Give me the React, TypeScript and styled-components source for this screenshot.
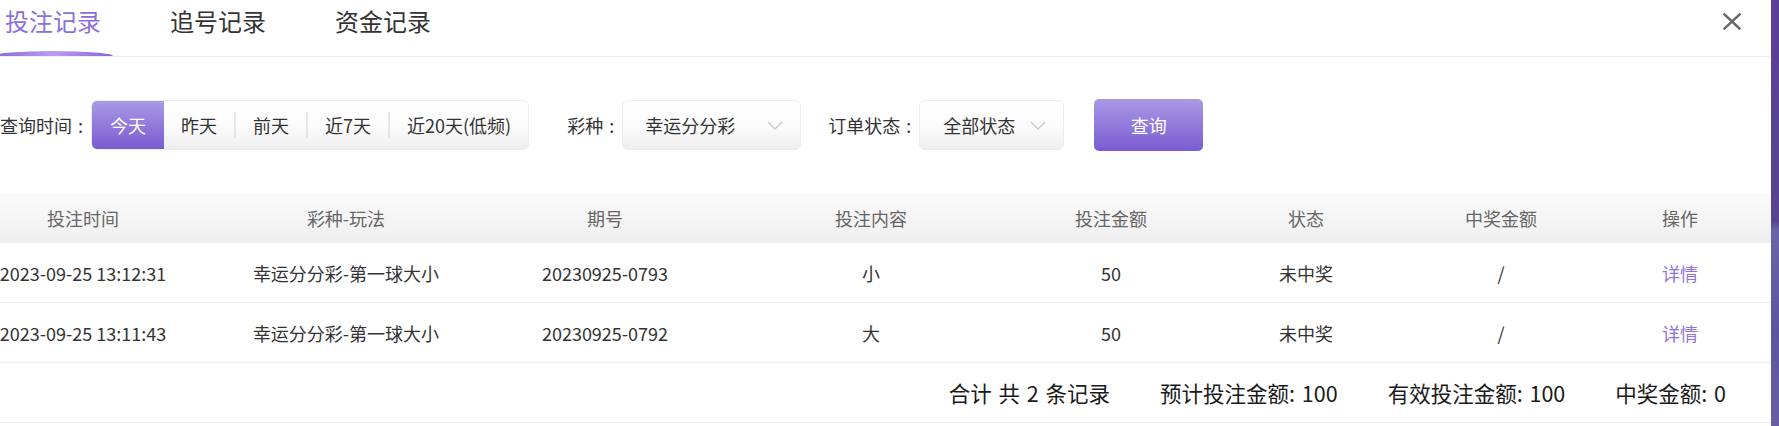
import React, { useState } from "react";
import styled, { createGlobalStyle } from "styled-components";

// 전역 스타일
const GlobalStyle = createGlobalStyle`
  html, body {
    margin: 0;
    padding: 0;
    background: #fff;
    font-family: "Noto Sans CJK SC", "Noto Sans", sans-serif;
    color: #333;
  }
  * { box-sizing: border-box; }
`;

const Page = styled.div`
  display: flex;
  width: 1779px;
  height: 426px;
  overflow: hidden;
`;

const Modal = styled.div`
  flex: 1;
  min-width: 0;
  background: #fff;
  display: flex;
  flex-direction: column;
  overflow: hidden;
`;

// 모달 뒤의 보라색 배경
const Backdrop = styled.div`
  width: 8px;
  flex-shrink: 0;
  background: linear-gradient(
    180deg,
    #5a3e98 0%,
    #56468f 52%,
    #6a64a8 54%,
    #5b55a0 78%,
    #6a5fa4 100%
  );
`;

// 탭 영역
const TabBar = styled.div`
  display: flex;
  height: 57px;
  border-bottom: 1px solid #eeeeee;
  flex-shrink: 0;
`;

const TabList = styled.div`
  display: flex;
  gap: 45px;
  margin-left: -7px;
`;

const Tab = styled.div<{ $active?: boolean }>`
  width: 120px;
  display: flex;
  flex-direction: column;
  align-items: center;
  padding-top: 5px;
  font-size: 24px;
  line-height: 32px;
  color: ${({ $active }) => ($active ? "#8b70da" : "#333")};
  cursor: pointer;
`;

const TabLine = styled.div<{ $active?: boolean }>`
  margin-top: auto;
  width: 100%;
  height: 5px;
  border-radius: 50% 50% 0 0 / 100% 100% 0 0;
  background: ${({ $active }) =>
    $active
      ? "linear-gradient(90deg, #8867d8 0%, #b89ef2 50%, #8867d8 100%)"
      : "transparent"};
`;

const CloseBtn = styled.button`
  margin-left: auto;
  margin-right: 30px;
  margin-top: 13px;
  align-self: flex-start;
  border: none;
  background: none;
  padding: 0;
  width: 18px;
  height: 17px;
  cursor: pointer;
  display: flex;
`;

// 필터
const FilterRow = styled.div`
  display: flex;
  align-items: center;
  height: 52px;
  margin-top: 42px;
  font-size: 18px;
`;

const Label = styled.span<{ $ml?: number }>`
  color: #333;
  white-space: nowrap;
  word-spacing: 2px;
  margin-left: ${({ $ml }) => $ml ?? 0}px;
  margin-right: 8px;
`;

const DayGroup = styled.div`
  display: flex;
  align-items: center;
  height: 50px;
  border: 1px solid #ececec;
  border-radius: 6px;
  background: linear-gradient(180deg, #ffffff 0%, #fbfbfb 55%, #eeeeee 100%);
  overflow: hidden;
`;

const DayBtn = styled.div<{ $active?: boolean }>`
  height: 100%;
  display: flex;
  align-items: center;
  padding: 0 ${({ $active }) => ($active ? 18 : 17)}px;
  color: ${({ $active }) => ($active ? "#fff" : "#333")};
  background: ${({ $active }) =>
    $active ? "linear-gradient(180deg, #a999e5 0%, #7a5bd2 100%)" : "none"};
  white-space: nowrap;
  cursor: pointer;
`;

const DaySep = styled.span`
  width: 2px;
  height: 26px;
  flex-shrink: 0;
  background: #e6e6e6;
`;

const Select = styled.div<{ $w: number; $pl: number }>`
  width: ${({ $w }) => $w}px;
  height: 50px;
  display: flex;
  align-items: center;
  justify-content: space-between;
  padding: 0 17px 0 ${({ $pl }) => $pl}px;
  border: 1px solid #ececec;
  border-radius: 6px;
  background: linear-gradient(180deg, #ffffff 0%, #fbfbfb 55%, #eeeeee 100%);
  color: #333;
  cursor: pointer;
`;

const QueryBtn = styled.button`
  margin-left: 30px;
  width: 109px;
  height: 52px;
  border: none;
  border-radius: 5px;
  background: linear-gradient(180deg, #a999e5 0%, #7a5bd2 100%);
  color: #fff;
  font-family: inherit;
  font-size: 18px;
  cursor: pointer;
`;

// 테이블
const Table = styled.div`
  margin-top: 42px;
  margin-left: -35px;
  width: 1806px;
`;

const GridRow = styled.div<{ $head?: boolean }>`
  display: grid;
  grid-template-columns: 236px 290px 228px 304px 176px 214px 176px 182px;
  align-items: center;
  height: ${({ $head }) => ($head ? 50 : 60)}px;
  font-size: 18px;
  color: ${({ $head }) => ($head ? "#666" : "#333")};
  background: ${({ $head }) =>
    $head ? "linear-gradient(180deg, #fbfbfb 0%, #efefef 100%)" : "#fff"};
  border-bottom: ${({ $head }) => ($head ? "none" : "1px solid #eeeeee")};
`;

const Cell = styled.div<{ $link?: boolean }>`
  text-align: center;
  white-space: nowrap;
  color: ${({ $link }) => ($link ? "#8f74e0" : "inherit")};
  cursor: ${({ $link }) => ($link ? "pointer" : "default")};
`;

const Footer = styled.div`
  display: flex;
  justify-content: flex-end;
  align-items: center;
  gap: 50px;
  height: 60px;
  padding-right: 45px;
  border-bottom: 1px solid #eeeeee;
  font-size: 21.5px;
  word-spacing: 2px;
  color: #1a1a1a;
  white-space: nowrap;
`;

const Chevron = () => (
  <svg width="16" height="9" viewBox="0 0 16 9" fill="none">
    <polyline points="1,1 8,8 15,1" stroke="#c9c9c9" strokeWidth="1.3" />
  </svg>
);

const columns = ["投注时间", "彩种-玩法", "期号", "投注内容", "投注金额", "状态", "中奖金额", "操作"];

const records = [
  { time: "2023-09-25 13:12:31", game: "幸运分分彩-第一球大小", issue: "20230925-0793", content: "小", amount: 50, status: "未中奖", win: "/" },
  { time: "2023-09-25 13:11:43", game: "幸运分分彩-第一球大小", issue: "20230925-0792", content: "大", amount: 50, status: "未中奖", win: "/" },
];

const days = ["今天", "昨天", "前天", "近7天", "近20天(低频)"];

export default function App() {
  const [tab, setTab] = useState(0);
  const [day, setDay] = useState(0);
  const tabs = ["投注记录", "追号记录", "资金记录"];

  return (
    <>
      <GlobalStyle />
      <Page>
        <Modal>
          <TabBar>
            <TabList>
              {tabs.map((t, i) => (
                <Tab key={t} $active={tab === i} onClick={() => setTab(i)}>
                  {t}
                  <TabLine $active={tab === i} />
                </Tab>
              ))}
            </TabList>
            <CloseBtn aria-label="close">
              <svg width="18" height="17" viewBox="0 0 18 17">
                <path d="M1.5 1.5 L16.5 15.5 M16.5 1.5 L1.5 15.5" stroke="#6b6b6b" strokeWidth="2.4" strokeLinecap="square" />
              </svg>
            </CloseBtn>
          </TabBar>

          <FilterRow>
            <Label>查询时间 :</Label>
            <DayGroup>
              {days.map((d, i) => (
                <React.Fragment key={d}>
                  {i > 1 && <DaySep />}
                  <DayBtn $active={day === i} onClick={() => setDay(i)}>
                    {d}
                  </DayBtn>
                </React.Fragment>
              ))}
            </DayGroup>
            <Label $ml={38}>彩种 :</Label>
            <Select $w={179} $pl={22}>
              幸运分分彩
              <Chevron />
            </Select>
            <Label $ml={27}>订单状态 :</Label>
            <Select $w={145} $pl={23}>
              全部状态
              <Chevron />
            </Select>
            <QueryBtn>查询</QueryBtn>
          </FilterRow>

          <Table>
            <GridRow $head>
              {columns.map((c) => (
                <Cell key={c}>{c}</Cell>
              ))}
            </GridRow>
            {records.map((r) => (
              <GridRow key={r.issue}>
                <Cell>{r.time}</Cell>
                <Cell>{r.game}</Cell>
                <Cell>{r.issue}</Cell>
                <Cell>{r.content}</Cell>
                <Cell>{r.amount}</Cell>
                <Cell>{r.status}</Cell>
                <Cell>{r.win}</Cell>
                <Cell $link>详情</Cell>
              </GridRow>
            ))}
            <Footer>
              <span>合计 共 2 条记录</span>
              <span>预计投注金额: 100</span>
              <span>有效投注金额: 100</span>
              <span>中奖金额: 0</span>
            </Footer>
          </Table>
        </Modal>
        <Backdrop />
      </Page>
    </>
  );
}
